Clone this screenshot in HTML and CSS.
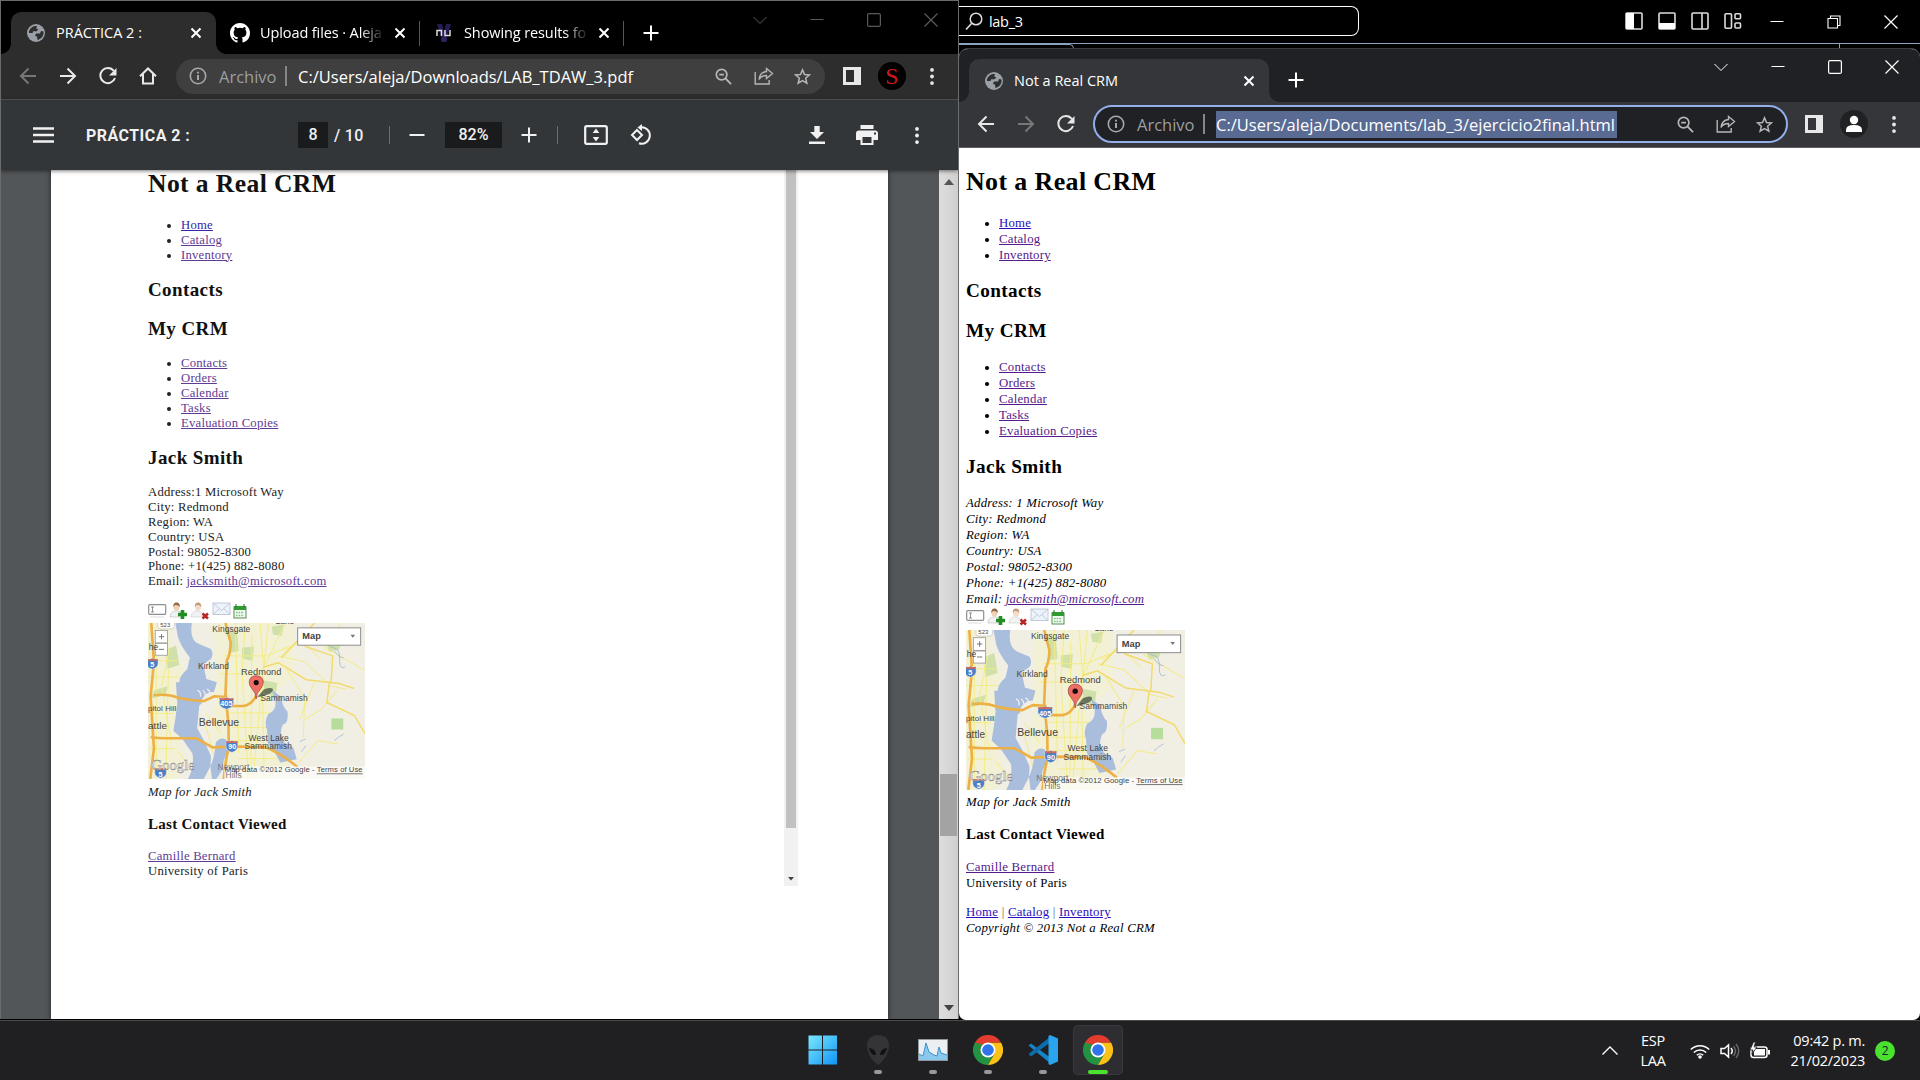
FILE: index.html
```html
<!DOCTYPE html>
<html lang="es">
<head>
<meta charset="utf-8">
<title>Escritorio</title>
<link rel="stylesheet" href="styles.css">
</head>
<body>
<svg class="defs" aria-hidden="true">
  <symbol id="globe" viewBox="0 0 18 18"><circle cx="9" cy="9" r="9" fill="#9aa0a6"/><path d="M2 7C4 3 7 1.500 10 2.200L9.200 4.500 11.500 5.500 9 7.500 6.500 7 5.500 9 2 9zM9 9.500h4l1-2.500 2.500.5c.5 4-2 7.500-6 8.500l-.5-3.500-2-.5z" fill="#2e2f31"/></symbol>
  <symbol id="close" viewBox="0 0 12 12"><path d="M1.500 1.500l9 9m0-9l-9 9" stroke="#fff" stroke-width="2"/></symbol>
  <symbol id="plus" viewBox="0 0 16 16"><path d="M8 .5v15M.5 8h15" stroke="currentColor" stroke-width="2"/></symbol>
  <symbol id="back" viewBox="0 0 18 18"><path d="M17 9H2M9.500 1.500L2 9l7.500 7.500" fill="none" stroke="currentColor" stroke-width="2"/></symbol>
  <symbol id="forward" viewBox="0 0 18 18"><path d="M1 9h15M8.500 1.500L16 9l-7.500 7.500" fill="none" stroke="currentColor" stroke-width="2"/></symbol>
  <symbol id="reload" viewBox="0 0 18 18"><path d="M14.800 4A7.500 7.500 0 1 0 16 11" fill="none" stroke="currentColor" stroke-width="2"/><path d="M17.500 1v7.500H10z" fill="currentColor"/></symbol>
  <symbol id="home" viewBox="0 0 18 18"><path d="M1 9.200L9 1.500l8 7.700M4 7v9.500h10V7" fill="none" stroke="currentColor" stroke-width="2"/></symbol>
  <symbol id="info" viewBox="0 0 18 18"><circle cx="9" cy="9" r="7.700" fill="none" stroke="currentColor" stroke-width="1.600"/><path d="M9 8v5M9 4.800v1.800" stroke="currentColor" stroke-width="2"/></symbol>
  <symbol id="zoomout" viewBox="0 0 18 18"><circle cx="7" cy="7" r="5.600" fill="none" stroke="currentColor" stroke-width="1.800"/><path d="M4.500 7h5M11 11l6 6" stroke="currentColor" stroke-width="2" fill="none"/></symbol>
  <symbol id="share" viewBox="0 0 20 18"><path d="M1.200 5v12h14v-4M12.500 1.500L18.500 6.500 12.500 11.500V8.500C9 8.500 6.500 9.500 5 12.500 5.500 8 8 5 12.500 4.500z" fill="none" stroke="currentColor" stroke-width="1.400"/></symbol>
  <symbol id="star" viewBox="0 0 18 18"><path d="M9 2l2.100 5 5.200.4-4 3.400 1.300 5.200L9 13.300 4.400 16l1.300-5.200-4-3.400L6.900 7z" fill="none" stroke="currentColor" stroke-width="1.600"/></symbol>
  <symbol id="panel" viewBox="0 0 18 18"><path d="M0 0h18v18H0zM3 3v12h8V3z" fill="#e8e8e8" fill-rule="evenodd"/></symbol>
  <symbol id="dots" viewBox="0 0 4 18"><circle cx="2" cy="2" r="2" fill="currentColor"/><circle cx="2" cy="9" r="2" fill="currentColor"/><circle cx="2" cy="16" r="2" fill="currentColor"/></symbol>
  <symbol id="w-chev" viewBox="0 0 14 14"><path d="M.5 4L7 10.500 13.500 4" fill="none" stroke="currentColor"/></symbol>
  <symbol id="w-min" viewBox="0 0 14 14"><path d="M.5 6.500h13" stroke="currentColor"/></symbol>
  <symbol id="w-max" viewBox="0 0 14 14"><rect x=".6" y=".6" width="12.800" height="12.800" rx="1.500" fill="none" stroke="currentColor" stroke-width="1.200"/></symbol>
  <symbol id="w-close" viewBox="0 0 14 14"><path d="M.5.5l13 13m0-13l-13 13" stroke="currentColor" stroke-width="1.200"/></symbol>
  <symbol id="chrome" viewBox="0 0 48 48"><path d="M24 24L3.200 12A24 24 0 0 0 24 48l10.400-18z" fill="#229342"/><path d="M24 12h20.800A24 24 0 0 1 24 48l10.400-18z" fill="#fbc116"/><path d="M3.200 12l10.400 18L24 12z" fill="#229342"/><path d="M3.200 12A24 24 0 0 1 44.800 12H24L13.600 18v12z" fill="#e33b2e"/><path d="M3.200 12l10.400 18 4-14z" fill="#229342"/><circle cx="24" cy="24" r="12" fill="#fff"/><circle cx="24" cy="24" r="9.300" fill="#2f74ea"/></symbol>
  <symbol id="actions" viewBox="0 0 100 18">
    <rect x=".7" y="2.700" width="17" height="9.600" rx="1" fill="#fff" stroke="#8f8f8f" stroke-width="1.200"/><path d="M3 5h3M4.500 5v5M3 10h3" stroke="#777" stroke-width=".8"/><path d="M2 15h14" stroke="#ddd"/>
    <path d="M22 15q0-5 5-6h3q5 1 5 6z" fill="#f1f2f3" stroke="#b9b9b9" stroke-width=".6"/><ellipse cx="28.500" cy="5" rx="3" ry="3.800" fill="#eed2b5"/><path d="M25.300 5Q25 .5 28.500.500T31.800 5Q30 2.500 27 3z" fill="#94673f"/><path d="M34.500 8v9M30 12.500h9" stroke="#238c24" stroke-width="3.600"/>
    <path d="M43 15q0-5 5-6h3q4 1 5 6z" fill="#f1f2f3" stroke="#c9c9c9" stroke-width=".6"/><ellipse cx="50" cy="5" rx="3" ry="3.800" fill="#f2dcc8"/><path d="M46.800 5Q46.500.5 50 .5T53.300 5Q51.500 2.500 48.500 3z" fill="#c29c77"/><path d="M54.500 11.500l5.500 5m0-5l-5.500 5" stroke="#b82323" stroke-width="2.500"/>
    <rect x="65" y="1" width="17" height="11.500" fill="#edf3fb" stroke="#c3c9d8"/><path d="M65 1l8.500 7.500L82 1M65 12.500l6-5.500M82 12.500L76 7" fill="none" stroke="#b7bfd0" stroke-width=".8"/>
    <rect x="86" y="5" width="12" height="11" fill="#f5fbf5" stroke="#548a55"/><path d="M86 4h12v4H86z" fill="#2f9b30"/><path d="M88 2v3M96 2v3" stroke="#277228"/><path d="M88 10.500h8M88 13.500h8" stroke="#75c776" stroke-width="1.400" stroke-dasharray="1.600 1"/>
  </symbol>
  <symbol id="shield" viewBox="0 0 36 34" preserveAspectRatio="none"><path d="M3 3Q10 5 18 2q8 3 15 1l1 12q0 12-16 17Q2 27 2 15z" fill="#4a7fc6" stroke="#e9eef6" stroke-width="1.500"/><path d="M3 3Q10 5 18 2q8 3 15 1v5H3z" fill="#c96a62"/></symbol>
  <symbol id="mapart" viewBox="35 104 658 479" preserveAspectRatio="none">
    <rect x="35" y="104" width="658" height="479" fill="#f1eee4"/>
    <path d="M35 104h70v60l45 90-35 160 30 100-20 69H35zM235 104h240v170l-60 50-20 110 90 60-60 89H290L225 440l15-120z" fill="#f3f2cf" opacity=".7"/>
    <g fill="#cfe0a8"><path d="M92 185l28-12 10 60-38 12zM320 180l36-4-4 45-32-8zM385 280l42 8-6 46-34-18zM55 310l40-12-8 28-44 10zM570 150l60-10-16 46-30 6zM275 125l30 5 5 60-24 5zM410 115l38-6-8 34-26-4z"/><path d="M591 397h36v34h-36z" fill="#b7dd9c"/></g>
    <g fill="none" stroke="#f4ec86" stroke-width="3"><path d="M72 104l25 150-8 329M100 180L76 300l30 170M330 104l-10 150 20 329M375 104l10 130-30 330M35 220h90M35 270h95M40 382h70M40 490h75M265 205h130l70-30M255 260h110M285 380h130M290 425h150M285 465h150M310 520h120M300 104l10 400M350 140l-3 400M400 104l-18 180 5 270M430 205l80 18 80 75 50 10M450 104l-60 130M445 190l55-30 60 55M455 245l55 88-4 122M510 400l50-30 50-60M490 535l60-70 60 10M540 285l-45 115M125 500l35 40M60 130v430M210 380l45 60M205 400l30 110M620 104l-50 75 122 70"/></g>
    <g fill="none" stroke="#f2db68" stroke-width="4.500"><path d="M385 240l45-14 85 52 100 12 45 15M585 290l-8 58 84 40 32 56M440 210L540 104M510 175l85 30-5 85"/></g>
    <g fill="#a9bddd"><path d="M118 104h50q-8 50 20 64l38 16q10 20-2 32l-22 15 10 45 32 10-9 30q-30-5-45 45l-6 66 20 36 22 50-2 32-20 38H156q20-36 14-78l-30-44-28-26q8-44 12-86l8-54q-8-24 22-49l8-36q-28-35-36-62z"/><path d="M241 470q15-18 30-8l14 20-20 43-5 30-18 28H229l-5-40q12-20 17-73zM410 310l28 20q6 35 20 46 4 35-14 40-14 28 4 54l28 18 10 34-50 10-16-30-22-30-2-40q-10-22 3-48 28-12 22-44z"/></g>
    <path d="M120 286h82l-5 68q-18-5-36 5l-20-20-18 6zM184 482q22 18 13 42l-8-8z" fill="#a9bddd"/>
    <g fill="none" stroke="#8eadd9" stroke-width="2"><path d="M575 150q4 28 23 30t18 36 18 22M600 190q20 24 28 20M495 468l18-8M600 465q14-12 28-20M500 500l14-20M590 135l20 34"/></g>
    <g fill="none" stroke="#edb044" stroke-width="8"><path d="M45 104l8 120-10 105 10 160-11 94M270 104q8 35 16 60-2 40-12 55l-4 105 9 90 1 76q-10 30-15 93M52 326q42-6 76 8 40 8 76 10l32-15 40 2M275 359h50q26-5 38-32M43 454q20 4 48 4h90l50 28 84-3 78 3q42 16 95 60" /></g>
    <path d="M185 310q12 5 9 20m7-20q8 8 8 17m4-20q13 4 7 20" fill="none" stroke="#eee" stroke-width="4"/>
    <path d="M266 545h427v38H266z" fill="#fff" opacity=".65"/>
    <use href="#shield" x="248" y="331" width="50" height="40"/><use href="#shield" x="269" y="463" width="41" height="41"/><use href="#shield" x="28" y="211" width="40" height="37"/><use href="#shield" x="53" y="547" width="40" height="36"/>
    <rect x="65" y="98" width="50" height="24" rx="8" fill="#fff" stroke="#888"/>
    <g fill="#fff" stroke="#999" stroke-width="2.500"><rect x="57" y="127" width="37" height="38"/><rect x="57" y="167" width="37" height="36"/></g><path d="M68 146h16m-8-8v16M68 185h16" stroke="#777" stroke-width="3"/>
    <rect x="489" y="119" width="191" height="53" fill="#fff" stroke="#777" stroke-width="2.500"/><path d="M649 140h14l-7 9z" fill="#777"/>
    <path d="M366 332l20-24q28-10 28 2-3 12-30 18z" fill="#4e5748" opacity=".8"/><path d="M363 337q-1-18-12-30-10-11-9-23 2-18 21-18t22 18q0 12-9 23-12 12-13 30z" fill="#ef6d63" stroke="#923c37" stroke-width="2"/><circle cx="363" cy="287" r="8" fill="#160b0b"/>
  </symbol>
</svg>

<main class="desktop">
  <section class="editor">
    <div class="editor-bar">
      <div class="search"><svg class="lens" viewBox="0 0 18 18"><circle cx="11" cy="7" r="5.800" fill="none" stroke="#ddd" stroke-width="1.500"/><path d="M7 11L1 17.500" stroke="#ddd" stroke-width="1.600"/></svg><span>lab_3</span></div>
      <div class="layout-icons">
        <svg width="18" height="18"><rect x="1" y="1" width="16" height="16" rx="1" fill="none" stroke="#ddd" stroke-width="1.600"/><path d="M1 1h8v16H1z" fill="#fff"/></svg>
        <svg width="18" height="18"><rect x="1" y="1" width="16" height="16" rx="1" fill="none" stroke="#ddd" stroke-width="1.600"/><path d="M1 11h16v6H1z" fill="#fff"/></svg>
        <svg width="18" height="18"><rect x="1" y="1" width="16" height="16" rx="1" fill="none" stroke="#ddd" stroke-width="1.600"/><path d="M11 1v16" stroke="#ddd" stroke-width="1.600"/></svg>
        <svg width="18" height="18"><g fill="none" stroke="#ddd" stroke-width="1.600"><rect x="1" y="1.800" width="6.500" height="14.500" rx="1"/><rect x="11" y="1.800" width="5.500" height="5" rx="1"/><rect x="11" y="11" width="5.500" height="5" rx="1"/></g></svg>
      </div>
      <div class="win-controls editor-controls">
        <svg width="14" height="14"><use href="#w-min"/></svg>
        <svg width="14" height="14"><path d="M1 3.500h9.500V13H1zM3.500 3.500V1H13v9.500h-2.500" fill="none" stroke="#fff" stroke-width="1.100"/></svg>
        <svg width="14" height="14"><use href="#w-close"/></svg>
      </div>
    </div>
    <div class="editor-line"><div class="editor-tab"></div><div class="editor-tick"></div></div>
  </section>

  <section class="window pdf-window">
    <header class="tabs">
      <div class="tab active"><svg class="fav"><use href="#globe"/></svg><span class="tab-title">PRÁCTICA 2 :</span><svg class="x"><use href="#close"/></svg></div>
      <div class="tab plain"><svg class="fav big" viewBox="0 0 16 16"><path fill="#fff" d="M8 0C3.580 0 0 3.580 0 8c0 3.540 2.290 6.530 5.470 7.590.4.070.55-.17.55-.38 0-.19-.01-.82-.01-1.490-2.010.37-2.530-.49-2.690-.94-.09-.23-.48-.94-.82-1.130-.28-.15-.68-.52-.01-.53.630-.01 1.080.58 1.230.82.720 1.210 1.870.87 2.330.66.070-.52.280-.87.510-1.070-1.780-.2-3.640-.89-3.640-3.950 0-.87.310-1.590.82-2.150-.08-.2-.36-1.020.080-2.120 0 0 .67-.21 2.200.82a7.600 7.600 0 0 1 4 0c1.530-1.040 2.200-.82 2.200-.82.440 1.100.160 1.920.080 2.120.51.560.82 1.270.82 2.150 0 3.070-1.870 3.750-3.650 3.950.29.250.54.730.54 1.480 0 1.070-.01 1.930-.01 2.200 0 .21.150.46.550.38A8 8 0 0 0 16 8c0-4.420-3.580-8-8-8z"/></svg><span class="tab-title fade">Upload files · Aleja</span><svg class="x"><use href="#close"/></svg></div>
      <div class="tab plain"><svg class="fav" viewBox="0 0 18 18"><path d="M2 0h5l2 8 2-8h5l-4 13H6z" fill="#241c52"/><circle cx="9" cy="15.500" r="3" fill="#2b2462"/><path d="M2 12V6.500h4.500V12M10 6v5.500h5V6" fill="none" stroke="#ddd" stroke-width="1.500"/></svg><span class="tab-title fade">Showing results fo</span><svg class="x"><use href="#close"/></svg></div>
      <svg class="newtab"><use href="#plus"/></svg>
      <div class="win-controls">
        <svg width="14" height="14"><use href="#w-chev"/></svg><svg width="14" height="14"><use href="#w-min"/></svg><svg width="14" height="14"><use href="#w-max"/></svg><svg width="14" height="14"><use href="#w-close"/></svg>
      </div>
    </header>
    <nav class="navbar">
      <span class="btn dim"><svg><use href="#back"/></svg></span><span class="btn"><svg><use href="#forward"/></svg></span><span class="btn"><svg><use href="#reload"/></svg></span><span class="btn"><svg><use href="#home"/></svg></span>
      <div class="omnibox">
        <svg class="info"><use href="#info"/></svg><span class="scheme">Archivo</span><i class="bar"></i><span class="url">C:/Users/aleja/Downloads/LAB_TDAW_3.pdf</span>
        <span class="omni-icons"><svg><use href="#zoomout"/></svg><svg class="wide"><use href="#share"/></svg><svg><use href="#star"/></svg></span>
      </div>
      <span class="btn after"><svg><use href="#panel"/></svg></span><span class="btn"><span class="avatar letter">S</span></span><span class="btn"><svg class="kebab"><use href="#dots"/></svg></span>
    </nav>
    <div class="pdfbar">
      <svg class="burger" viewBox="0 0 21 16"><path d="M0 1.500h21M0 8h21M0 14.500h21" stroke="#f1f1f1" stroke-width="2.400"/></svg>
      <b class="doc">PRÁCTICA 2 :</b>
      <span class="field page-no">8</span><span class="of">/ 10</span><i class="sep"></i>
      <svg class="minus" viewBox="0 0 16 16"><path d="M.5 8h15" stroke="#f1f1f1" stroke-width="2"/></svg>
      <span class="field pct">82%</span>
      <svg class="zoomin"><use href="#plus"/></svg><i class="sep second"></i>
      <svg class="fit" viewBox="0 0 24 20"><rect x="1.200" y="1.200" width="21.600" height="17.600" rx="1.500" fill="none" stroke="#f1f1f1" stroke-width="2.200"/><path d="M12 3.500l3.300 4.500H8.700zM12 16.500l3.300-4.500H8.700z" fill="#f1f1f1"/></svg>
      <svg class="rotate" viewBox="0 0 22 22"><path d="M7 6l5 5-5 5-5-5z" fill="none" stroke="#f1f1f1" stroke-width="2"/><path d="M10 3.500a8.200 8.200 0 1 1-1 15.800" fill="none" stroke="#f1f1f1" stroke-width="2"/><path d="M12 0v7L7.500 3.500z" fill="#f1f1f1"/></svg>
      <svg class="download" viewBox="0 0 16 18"><path d="M5.300 0h5.400v6H15L8 13 1 6h4.300zM0 15.500h16V18H0z" fill="#f1f1f1"/></svg>
      <svg class="print" viewBox="0 0 22 20"><path d="M4.500 0h13v4h-13zM3 5.500h16q3 0 3 3V15h-4.500v5h-13v-5H0V8.500q0-3 3-3zM6.500 12v6h9v-6zM18 7.500v2h2v-2z" fill="#f1f1f1" fill-rule="evenodd"/></svg>
      <svg class="kebab"><use href="#dots"/></svg>
    </div>
    <div class="pdf-body">
      <div class="sheet">
        <article class="crm printed">
          <h1>Not a Real CRM</h1>
          <ul><li><a class="new">Home</a></li><li><a>Catalog</a></li><li><a>Inventory</a></li></ul>
          <h2>Contacts</h2>
          <h2 class="my">My CRM</h2>
          <ul class="menu"><li><a>Contacts</a></li><li><a>Orders</a></li><li><a>Calendar</a></li><li><a>Tasks</a></li><li><a>Evaluation Copies</a></li></ul>
          <h2 class="person">Jack Smith</h2>
          <p class="address">Address:1 Microsoft Way<br>City: Redmond<br>Region: WA<br>Country: USA<br>Postal: 98052-8300<br>Phone: +1(425) 882-8080<br>Email: <a>jacksmith@microsoft.com</a></p>
          <svg class="actions"><use href="#actions"/></svg>
          <svg class="map" viewBox="35 104 658 479" preserveAspectRatio="none"><use href="#mapart" x="35" y="104" width="658" height="479"/><g class="map-text"><text x="72" y="117" font-size="18">523</text><text x="230" y="132">Kingsgate</text><text x="422" y="108">Lake</text><text x="37" y="186">he</text><text x="187" y="245">Kirkland</text><text x="317" y="263" font-size="28">Redmond</text><text x="376" y="342">Sammamish</text><text x="35" y="375" font-size="24">pitol Hill</text><text x="35" y="428" font-size="30">attle</text><text x="189" y="420" font-size="31.500">Bellevue</text><text x="340" y="466">West Lake</text><text x="328" y="492">Sammamish</text><text x="246" y="555" fill="#777">Newport</text><text x="270" y="581" fill="#777">Hills</text><text x="254" y="360" class="road">405</text><text x="278" y="492" class="road">90</text><text x="42" y="238" class="road">5</text><text x="67" y="576" class="road">5</text><text x="503" y="154" font-size="28" font-weight="bold">Map</text><text x="46" y="556" class="logo">Google</text><text x="268" y="563" font-size="22" textLength="418" lengthAdjust="spacingAndGlyphs">Map data ©2012 Google - <tspan text-decoration="underline">Terms of Use</tspan></text></g></svg>
          <p class="caption">Map for Jack Smith</p>
          <h3>Last Contact Viewed</h3>
          <p class="last"><a>Camille Bernard</a><br>University of Paris</p>
        </article>
        <div class="inner-scroll"><div class="inner-thumb"></div><svg viewBox="0 0 6 4"><path d="M0 0h6L3 3.500z" fill="#444"/></svg></div>
      </div>
      <div class="scrollbar"><svg viewBox="0 0 10 6"><path d="M0 6h10L5 0z" fill="#555"/></svg><div class="thumb"></div><svg viewBox="0 0 10 6"><path d="M0 0h10L5 6z" fill="#444"/></svg></div>
    </div>
  </section>

  <section class="window web-window">
    <header class="tabs">
      <div class="tab active"><svg class="fav"><use href="#globe"/></svg><span class="tab-title">Not a Real CRM</span><svg class="x"><use href="#close"/></svg></div>
      <svg class="newtab"><use href="#plus"/></svg>
      <div class="win-controls">
        <svg width="14" height="14"><use href="#w-chev"/></svg><svg width="14" height="14"><use href="#w-min"/></svg><svg width="14" height="14"><use href="#w-max"/></svg><svg width="14" height="14"><use href="#w-close"/></svg>
      </div>
    </header>
    <nav class="navbar">
      <span class="btn"><svg><use href="#back"/></svg></span><span class="btn dim"><svg><use href="#forward"/></svg></span><span class="btn"><svg><use href="#reload"/></svg></span>
      <div class="omnibox focused">
        <svg class="info"><use href="#info"/></svg><span class="scheme">Archivo</span><i class="bar"></i><span class="url selected">C:/Users/aleja/Documents/lab_3/ejercicio2final.html</span>
        <span class="omni-icons"><svg><use href="#zoomout"/></svg><svg class="wide"><use href="#share"/></svg><svg><use href="#star"/></svg></span>
      </div>
      <span class="btn after"><svg><use href="#panel"/></svg></span><span class="btn"><span class="avatar person-icon"><svg viewBox="0 0 18 18"><circle cx="9" cy="5" r="4.200" fill="#fff"/><path d="M1 17v-2q0-5 8-5t8 5v2z" fill="#fff"/></svg></span></span><span class="btn"><svg class="kebab"><use href="#dots"/></svg></span>
    </nav>
    <article class="crm live">
      <h1>Not a Real CRM</h1>
      <ul><li><a class="new">Home</a></li><li><a>Catalog</a></li><li><a>Inventory</a></li></ul>
      <h2>Contacts</h2>
      <h2 class="my">My CRM</h2>
      <ul class="menu"><li><a>Contacts</a></li><li><a>Orders</a></li><li><a>Calendar</a></li><li><a>Tasks</a></li><li><a>Evaluation Copies</a></li></ul>
      <h2 class="person">Jack Smith</h2>
      <p class="address">Address: 1 Microsoft Way<br>City: Redmond<br>Region: WA<br>Country: USA<br>Postal: 98052-8300<br>Phone: +1(425) 882-8080<br>Email: <a>jacksmith@microsoft.com</a></p>
      <svg class="actions"><use href="#actions"/></svg>
      <svg class="map" viewBox="35 104 658 479" preserveAspectRatio="none"><use href="#mapart" x="35" y="104" width="658" height="479"/><g class="map-text"><text x="72" y="117" font-size="18">523</text><text x="230" y="132">Kingsgate</text><text x="422" y="108">Lake</text><text x="37" y="186">he</text><text x="187" y="245">Kirkland</text><text x="317" y="263" font-size="28">Redmond</text><text x="376" y="342">Sammamish</text><text x="35" y="375" font-size="24">pitol Hill</text><text x="35" y="428" font-size="30">attle</text><text x="189" y="420" font-size="31.500">Bellevue</text><text x="340" y="466">West Lake</text><text x="328" y="492">Sammamish</text><text x="246" y="555" fill="#777">Newport</text><text x="270" y="581" fill="#777">Hills</text><text x="254" y="360" class="road">405</text><text x="278" y="492" class="road">90</text><text x="42" y="238" class="road">5</text><text x="67" y="576" class="road">5</text><text x="503" y="154" font-size="28" font-weight="bold">Map</text><text x="46" y="556" class="logo">Google</text><text x="268" y="563" font-size="22" textLength="418" lengthAdjust="spacingAndGlyphs">Map data ©2012 Google - <tspan text-decoration="underline">Terms of Use</tspan></text></g></svg>
      <p class="caption">Map for Jack Smith</p>
      <h3>Last Contact Viewed</h3>
      <p class="last"><a>Camille Bernard</a><br>University of Paris</p>
      <footer><a class="new">Home</a> <span class="pipe">|</span> <a class="new">Catalog</a> <span class="pipe">|</span> <a class="new">Inventory</a><br><i>Copyright © 2013 Not a Real CRM</i></footer>
    </article>
  </section>
</main>

<footer class="taskbar">
  <div class="apps">
    <div class="app"><svg viewBox="0 0 30 30"><defs><linearGradient id="wg" x1="0" y1="0" x2="1" y2="1"><stop offset="0" stop-color="#7be9ff"/><stop offset="1" stop-color="#1094f3"/></linearGradient></defs><path d="M.5.5H14v14H.5zM15 .5h14v14H15zM.5 15.500H14v14H.5zM15 15.500h14v14H15z" fill="url(#wg)"/></svg></div>
    <div class="app run"><svg viewBox="0 0 30 30"><path d="M15 0C7 0 4 5 4 11s4 14 11 19c7-5 11-13 11-19S23 0 15 0z" fill="#343436"/><path d="M6 13q7 1 7 7-5 1-7-7zM24 13q-7 1-7 7 5 1 7-7z" fill="#111"/></svg></div>
    <div class="app run"><svg viewBox="0 0 30 30"><rect x=".5" y="4.500" width="29" height="21" fill="#eceff2" stroke="#8f979d"/><path d="M1 19l4 2 3-13 3 9 5 3 3 1 2-9 2 6 6 2v5H1z" fill="#8ac8ee"/><path d="M1 19l4 2 3-13 3 9 5 3 3 1 2-9 2 6 6 2" fill="none" stroke="#3b91cd"/></svg></div>
    <div class="app run"><svg><use href="#chrome"/></svg></div>
    <div class="app run"><svg viewBox="0 0 30 30"><path d="M.5 10.500L3 8.500 23 23v6z" fill="#1583c7"/><path d="M.5 19l2.500 2.500L23 7V1z" fill="#0d6cab"/><path d="M22 0l8 3.500v23L22 30l-1.500-1V1z" fill="#2ba4ee"/></svg></div>
    <div class="app run current"><svg><use href="#chrome"/></svg></div>
  </div>
  <div class="tray">
    <svg class="caret" viewBox="0 0 16 9"><path d="M.5 8.500L8 1l7.500 7.500" fill="none" stroke="#fff" stroke-width="1.300"/></svg>
    <div class="lang">ESP<br>LAA</div>
    <svg class="wifi" viewBox="0 0 20 16"><g fill="none" stroke="#fff" stroke-width="1.500"><path d="M.8 6.500a13 13 0 0 1 18.400 0M3.800 9.500a8.800 8.800 0 0 1 12.400 0M6.800 12.200a4.600 4.600 0 0 1 6.400 0"/></g><circle cx="10" cy="14" r="1.800" fill="#fff"/></svg>
    <svg class="sound" viewBox="0 0 20 16"><path d="M1 5.500h3.500L8.500 2v12l-4-3.500H1zM11 5q2.500 3 0 6" fill="none" stroke="#fff" stroke-width="1.500"/><path d="M13.500 3q4 5 0 10M16 1q5.500 7 0 14" fill="none" stroke="#666" stroke-width="1.400"/></svg>
    <svg class="battery" viewBox="0 0 20 17"><rect x="1" y="5" width="16" height="10.500" rx="2.500" fill="none" stroke="#fff" stroke-width="1.500"/><rect x="4" y="7" width="11" height="6.500" fill="#fff"/><path d="M18 8v4.500h2V8z" fill="#fff"/><path d="M3.500 0L0 8h3l-1 4 5-7H4L5.500 0z" fill="#fff" stroke="#202023" stroke-width=".8"/></svg>
    <div class="clock">09:42 p. m.<br>21/02/2023</div>
    <div class="badge">2</div>
  </div>
</footer>
</body>
</html>
```
FILE: styles.css
```css
* { box-sizing: border-box; }
body { margin: 0; width: 1920px; height: 1080px; overflow: hidden; background: #000; color: #fff; font-family: "Open Sans", "Noto Sans", sans-serif; display: flex; flex-direction: column; }
svg { display: block; flex: none; overflow: hidden; }
.defs { position: absolute; width: 0; height: 0; }
i.bar, i.sep { display: block; flex: none; }
.desktop { position: relative; height: 1020px; flex: none; background: #000; overflow: hidden; }

/* editor behind the browser windows */
.editor { position: absolute; left: 959px; top: 0; width: 961px; height: 60px; }
.editor-bar { display: flex; height: 43px; align-items: flex-start; }
.search { display: flex; align-items: center; width: 400px; height: 30px; margin-top: 6px; padding-left: 6px; gap: 6px; border: 1px solid #fff; border-left: 0; border-radius: 0 8px 8px 0; font-size: 14.500px; letter-spacing: -.3px; }
.lens { width: 18px; height: 18px; }
.layout-icons { display: flex; gap: 15px; margin: 12px 0 0 266px; }
.win-controls { display: flex; color: #fff; gap: 43px; }
.editor-controls { margin: 15px 0 0 28px; }
.editor-line { display: flex; justify-content: space-between; height: 6px; border-top: 1px solid #8aa3bf; padding-right: 80px; }
.editor-tab { width: 115px; border-top: 1px solid #8aa3bf; border-right: 1px solid #8aa3bf; border-radius: 0 5px 0 0; }
.editor-tick { width: 1px; background: #8aa3bf; }

/* browser windows */
.window { position: absolute; overflow: hidden; display: flex; flex-direction: column; }
.pdf-window { left: 0; top: 0; width: 959px; height: 1019px; border: 1px solid #6b6b6b; border-width: 1px 1px 0 1px; background: #000; }
.web-window { left: 959px; top: 48px; width: 961px; height: 972px; border-top: 1px solid #3a3b3e; background: #fff; border-radius: 9px 9px 7px 7px; }
.tabs { display: flex; flex: none; height: 53px; padding: 11px 0 0 10px; }
.web-window .tabs { background: #202124; padding: 10px 0 0 10px; }
.tab { display: flex; align-items: center; width: 204px; height: 42px; padding-left: 15px; }
.pdf-window .tab.active { width: 205px; padding-left: 16px; }
.tab.active { background: #2d2d2d; border-radius: 10px 10px 0 0; position: relative; }
.web-window .tab.active { width: 300px; height: 43px; padding-left: 16px; background: #35363a; }
.tab.active::before, .tab.active::after { content: ""; position: absolute; bottom: 0; width: 10px; height: 10px; }
.tab.active::before { left: -10px; background: radial-gradient(circle at 0 0, transparent 9.500px, #2d2d2d 10px); }
.tab.active::after { right: -10px; background: radial-gradient(circle at 100% 0, transparent 9.500px, #2d2d2d 10px); }
.web-window .tab.active::before { background: radial-gradient(circle at 0 0, transparent 9.500px, #35363a 10px); }
.web-window .tab.active::after { background: radial-gradient(circle at 100% 0, transparent 9.500px, #35363a 10px); }
.tab.plain { background: linear-gradient(#555, #555) 203px 9px / 1px 25px no-repeat; }
.fav { width: 18px; height: 18px; }
.fav.big { width: 20px; height: 20px; margin: 0 -1px; }
.tab-title { width: 125px; margin-left: 11px; font-size: 14.500px; line-height: 22px; white-space: nowrap; }
.web-window .tab-title { width: 220px; }
.fade { letter-spacing: -.1px; -webkit-mask-image: linear-gradient(90deg, #000 80%, transparent); mask-image: linear-gradient(90deg, #000 80%, transparent); }
.x { width: 12px; height: 12px; margin-left: 9px; }
.web-window .x { margin-left: 9px; }
.newtab { width: 16px; height: 16px; margin: 13px 0 0 19px; color: #fff; }
.tabs .win-controls { margin: 1px 20px 0 auto; }
.pdf-window .win-controls { color: #5a5a5a; }
.web-window .win-controls { margin: 1px 21px 0 auto; }
.navbar { display: flex; align-items: center; flex: none; height: 46px; padding: 0 0 1px 7px; background: #2d2d2d; border-bottom: 1px solid #5a5857; }
.web-window .navbar { height: 46px; background: #35363a; border-bottom-color: #5d5e60; }
.btn { display: flex; flex: none; width: 40px; justify-content: center; color: #e8e8e8; }
.btn.dim { color: #777; }
.btn svg { width: 18px; height: 18px; }
.btn .kebab { width: 4px; height: 17px; }
.omnibox { display: flex; align-items: center; flex: none; width: 649px; height: 35px; margin-left: 8px; padding-left: 13px; border-radius: 18px; background: #3f3f3f; font-size: 16.500px; }
.omnibox.focused { width: 695px; height: 38px; margin-left: 7px; padding-left: 12px; border: 2px solid #93aeea; background: #202124; border-radius: 19px; }
.info { width: 18px; height: 18px; color: #a5a7aa; }
.scheme { width: 58px; margin-left: 12px; color: #9c9ea1; white-space: nowrap; }
.bar { width: 2px; height: 20px; margin: 0 11px 0 8px; background: #858689; }
.url { line-height: 27px; white-space: nowrap; }
.selected { width: 401px; background: #5a6b93; }
.omni-icons { display: flex; align-items: center; gap: 22px; margin-left: auto; margin-right: 14px; color: #b5b6b8; }
.focused .omni-icons { margin-right: 13px; }
.omni-icons svg { width: 17px; height: 17px; }
.omni-icons .wide { width: 20px; height: 18px; margin-right: -2px; }
.after { margin-left: 7px; }
.web-window .after { margin-left: 6px; }
.avatar { display: flex; align-items: center; justify-content: center; width: 28px; height: 28px; border-radius: 50%; background: #000; }
.letter { color: #d01818; font: 24px/28px "Liberation Serif", serif; }
.person-icon { background: #202124; }

/* PDF viewer */
.pdfbar { display: flex; align-items: center; flex: none; height: 70px; padding-left: 32px; background: #323639; color: #f1f1f1; font: 500 16px Roboto, sans-serif; position: relative; box-shadow: 0 1px 4px #0008; z-index: 1; }
.burger { width: 21px; height: 16px; }
.doc { width: 212px; margin-left: 32px; font-weight: 700; letter-spacing: .45px; }
.field { height: 26px; line-height: 26px; background: #191b1c; text-align: center; }
.page-no { width: 30px; }
.of { width: 55px; padding-left: 6px; letter-spacing: .3px; white-space: pre; }
.sep { width: 1px; height: 18px; margin-left: 6px; background: #6b6e70; }
.minus { width: 16px; height: 16px; margin: 0 20px 0 19px; }
.pct { width: 57px; }
.zoomin { width: 16px; height: 16px; margin: 0 14px 0 19px; }
.fit { width: 24px; height: 20px; margin-left: 26px; }
.rotate { width: 22px; height: 22px; margin-left: 22px; }
.download { width: 16px; height: 18px; margin-left: 157px; }
.print { width: 22px; height: 20px; margin-left: 31px; }
.pdfbar .kebab { width: 4px; height: 17px; margin-left: 37px; }
.pdf-body { display: flex; justify-content: space-between; flex: 1; min-height: 0; padding-left: 50px; background: #525659; }
.sheet { display: flex; align-items: flex-start; width: 837px; background: #fff; padding-left: 97px; box-shadow: 0 0 5px #0009; }
.inner-scroll { display: flex; flex-direction: column; align-items: center; justify-content: space-between; width: 14px; height: 716px; margin-left: 85px; padding-bottom: 5px; background: #f1f1f1; }
.inner-thumb { width: 10px; height: 658px; background: #c1c1c1; }
.inner-scroll svg { width: 6px; height: 4px; }
.scrollbar { display: flex; flex-direction: column; align-items: center; width: 19px; padding: 9px 0 7px; background: linear-gradient(90deg, #dedede, #cfcfcf); }
.scrollbar svg { width: 10px; height: 6px; }
.thumb { width: 17px; height: 62px; margin: 589px 0 169px; background: #a3a3a3; }

/* CRM page */
.crm { font: 12.800px/16px "Liberation Serif", serif; letter-spacing: .23px; color: #000; }
.crm h1, .crm h2, .crm h3, .crm p, .crm ul { margin: 0; }
.crm h1 { font-size: 25.900px; line-height: 30px; letter-spacing: .4px; }
.crm h2 { font-size: 19.200px; line-height: 22px; letter-spacing: .4px; }
.crm h3 { font-size: 15px; line-height: 18px; letter-spacing: .28px; }
.crm ul { padding-left: 33px; }
.crm a { color: #551a8b; text-decoration: underline; }
.crm a.new { color: #2a0fc0; }
.crm .caption { font-style: italic; }
.live { padding: 19px 0 0 7px; }
.live ul { margin-top: 18px; }
.live h2 { margin-top: 17px; }
.live h2.my { margin-top: 18px; }
.live ul.menu { margin-top: 17px; }
.live h2.person { margin-top: 17px; }
.live .address { margin-top: 17px; font-style: italic; }
.live .actions { margin-top: 1px; }
.actions { width: 100px; height: 18px; }
.map { width: 219px; height: 160px; }
.live .map { margin-top: 4px; }
.live .caption { margin-top: 4px; }
.live h3 { margin-top: 15px; }
.live .last { margin-top: 16px; }
.live footer { margin-top: 13px; }
.pipe { color: #666; }
.printed { width: 551px; font-size: 12.700px; line-height: 14.800px; color: #222; }
.printed h1 { margin-top: -1px; font-size: 25.600px; color: #111; }
.printed h2 { font-size: 19px; margin-top: 17px; color: #111; }
.printed ul { margin-top: 19px; }
.printed ul.menu { margin-top: 16px; }
.printed .address { margin-top: 16px; }
.printed .actions { margin-top: 13px; }
.printed .map { width: 217px; height: 156px; margin-top: 3px; }
.printed .caption { margin-top: 6px; }
.printed h3 { margin-top: 15px; color: #111; }
.printed .last { margin-top: 16px; }
.printed a { color: #5f3b94; }
.printed a.new { color: #3524a8; }
.map-text { font-family: "Liberation Sans", sans-serif; font-size: 25.500px; fill: #444; }
.map-text .road { fill: #fff; font-size: 22px; font-weight: bold; }
.map-text .logo { font-family: "Liberation Serif", serif; font-size: 44px; fill: #fff; stroke: #888; stroke-width: 1.500px; }

/* taskbar */
.taskbar { display: flex; flex: none; height: 60px; background: #202023; border-top: 1px solid #4a4a4c; justify-content: space-between; }
.apps { display: flex; gap: 5px; margin: 4px 0 0 798px; height: 50px; }
.app { display: flex; flex-direction: column; align-items: center; width: 50px; height: 50px; padding-top: 10px; gap: 5px; }
.app svg { width: 30px; height: 30px; }
.run::after { content: ""; width: 8px; height: 4px; border-radius: 2px; background: #98989b; }
.current { background: #2e2e32; border-radius: 5px; box-shadow: inset 0 0 0 1px #39393c; }
.current::after { width: 20px; background: #4be12f; }
.tray { display: flex; align-items: center; padding-right: 25px; font-size: 14.500px; line-height: 20px; letter-spacing: -.25px; }
.caret { width: 16px; height: 9px; }
.lang { width: 60px; text-align: center; margin-left: 5px; }
.wifi { width: 20px; height: 16px; margin-left: 7px; }
.sound { width: 20px; height: 16px; margin-left: 10px; }
.battery { width: 20px; height: 17px; margin-left: 10px; }
.clock { width: 95px; text-align: right; white-space: nowrap; }
.badge { width: 20px; height: 20px; margin-left: 10px; border-radius: 50%; background: #4be12f; color: #123; font-size: 12px; text-align: center; }
```
